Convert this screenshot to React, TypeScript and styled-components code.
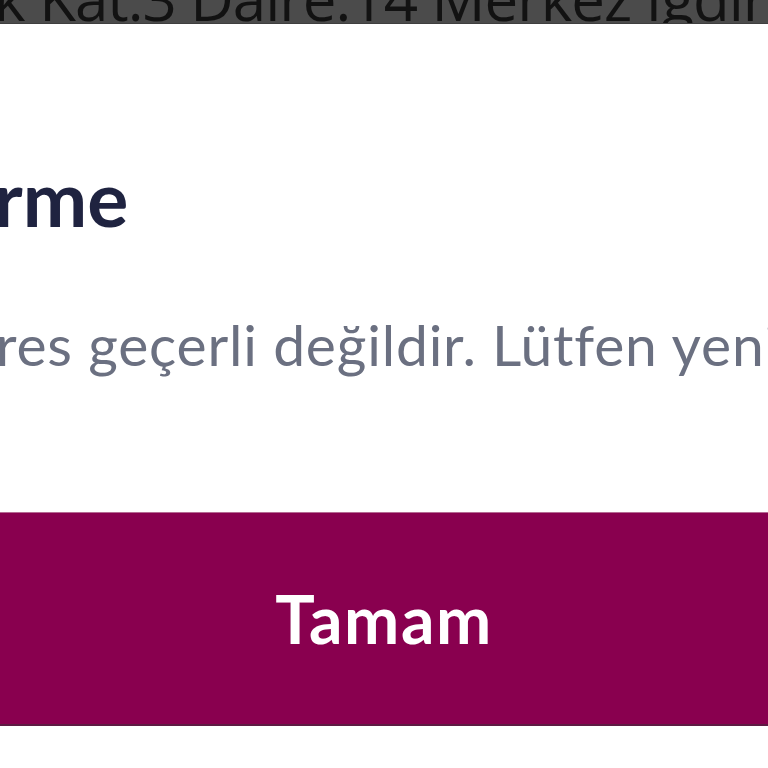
import React from "react";
import styled, { createGlobalStyle } from "styled-components";

const GlobalStyle = createGlobalStyle`
  html, body { margin: 0; padding: 0; background: #ffffff; }
  body { font-family: "Lato", "Noto Sans", sans-serif; }
`;

const Page = styled.div`
  width: 768px;
  height: 768px;
  overflow: hidden;
  background: #ffffff;
  display: flex;
  flex-direction: column;
`;

const TopBar = styled.div`
  height: 24px;
  flex: none;
  background: #4b4b4b;
  overflow: hidden;
  border-bottom: 1px solid #3f3f3f;
  box-sizing: border-box;
`;

const TopBarText = styled.div`
  font-family: "Open Sans", "Noto Sans", sans-serif;
  font-size: 60px;
  line-height: 60px;
  letter-spacing: -1px;
  margin-top: -32px;
  margin-left: -41px;
  color: #121212;
  white-space: nowrap;
`;

const Dialog = styled.div`
  display: flex;
  flex-direction: column;
  flex: 1;
`;

const Title = styled.h1`
  margin: 135px 0 0 -6px;
  font-family: "Lato", sans-serif;
  font-weight: 700;
  font-size: 77px;
  line-height: 77px;
  color: #1f2340;
  white-space: nowrap;
`;

const Message = styled.p`
  margin: 80px 0 0 -4px;
  font-family: "Lato", sans-serif;
  font-weight: 400;
  font-size: 57px;
  line-height: 57px;
  letter-spacing: 0.8px;
  color: #6b7081;
  white-space: nowrap;
`;

const ActionButton = styled.button`
  margin-top: 139px;
  height: 214px;
  width: 100%;
  border: none;
  border-top: 1px solid #b56a93;
  border-bottom: 2px solid #5e1a43;
  background: #89004f;
  color: #ffffff;
  font-family: "Lato", sans-serif;
  font-weight: 700;
  font-size: 66px;
  line-height: 66px;
  letter-spacing: 1.5px;
  display: flex;
  align-items: center;
  justify-content: center;
  padding: 0;
  cursor: pointer;
`;

export default function App() {
  return (
    <>
      <GlobalStyle />
      <Page>
        <TopBar>
          <TopBarText>ok Kat.3 Daire.14 Merkez Iğdır</TopBarText>
        </TopBar>
        <Dialog>
          <Title>rme</Title>
          <Message>res geçerli değildir. Lütfen yeniden</Message>
          <ActionButton>Tamam</ActionButton>
        </Dialog>
      </Page>
    </>
  );
}
